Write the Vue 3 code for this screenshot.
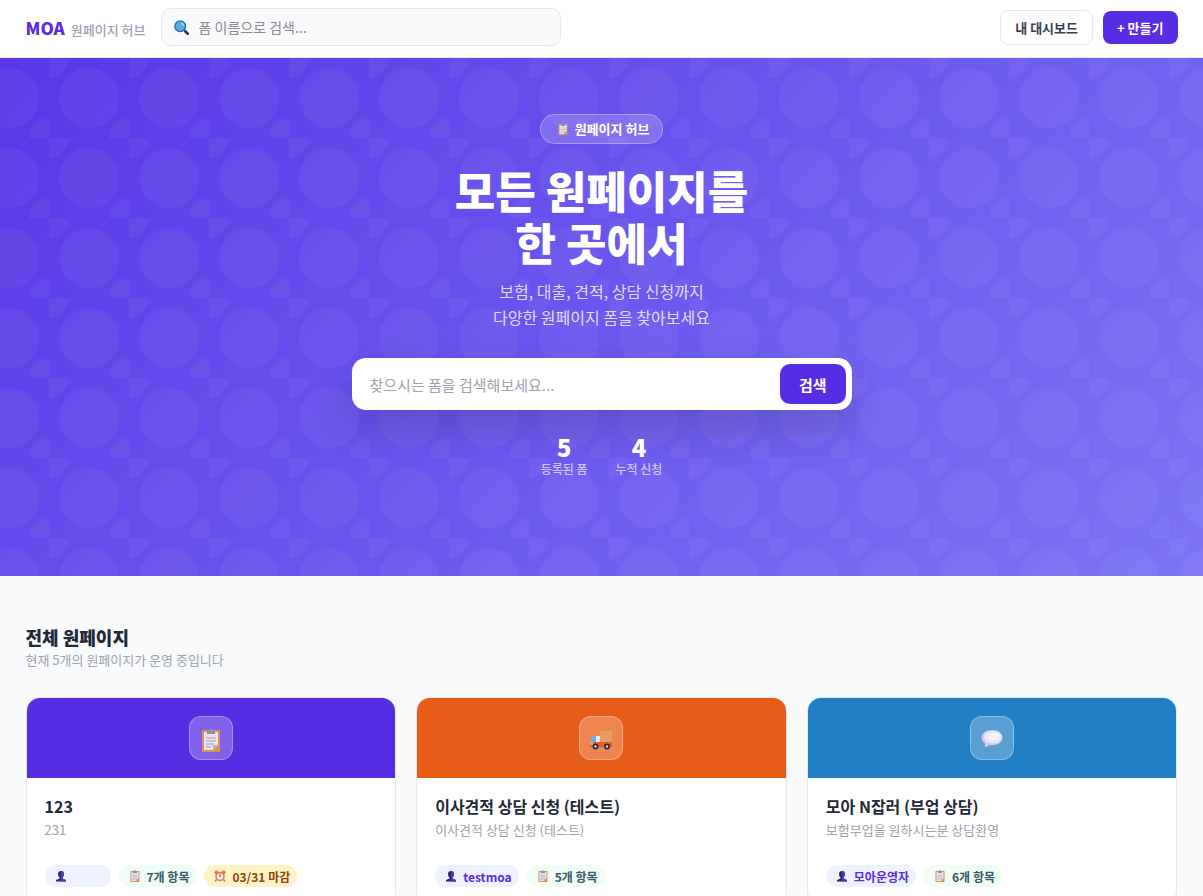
<template>
  <div class="page">
    <svg class="symbols" aria-hidden="true">
      <symbol id="icon-clipboard" viewBox="0 0 24 24">
        <rect x="3" y="2" width="18" height="22" rx="1" fill="#d9934e" />
        <path d="M5 4h14v13l-5 5H5z" fill="#e9e5f4" />
        <path d="M14 22v-5h5z" fill="#b9add2" />
        <path d="M7 10h10M7 13h10M7 16h8M7 19h5" stroke="#a39fb5" stroke-width="1" />
        <path d="M8 3h2c0-3.500 4-3.500 4 0h2v3H8z" fill="#898ba2" />
        <circle cx="12" cy="3" r="1" fill="#d9934e" />
      </symbol>
      <symbol id="icon-truck" viewBox="0 0 24 24">
        <rect x="11" y="3" width="12" height="12" fill="#e99c5c" />
        <path d="M4 8h6v6H1z" fill="#65b3ed" />
        <path d="M7 8h4v6H7z" fill="#e2e7f5" />
        <path d="M1 14h22v5H1z" fill="#e45e20" />
        <path d="M1 14h3v3H1z" fill="#f0a45c" />
        <circle cx="6.500" cy="18.500" r="3" fill="#262c42" />
        <circle cx="18" cy="18.500" r="3" fill="#262c42" />
        <circle cx="6.500" cy="18.500" r="1.200" fill="#d5d8f0" />
        <circle cx="18" cy="18.500" r="1.200" fill="#d5d8f0" />
      </symbol>
      <symbol id="icon-chat" viewBox="0 0 24 24">
        <path
          d="M12 2C6 2 1.500 5.500 1.500 9.500c0 2.500 1.500 4.300 3.500 5.500v4c1.500 0 3-1 4.500-2C17 18 22.500 14.500 22.500 9.500 22.500 5.500 18 2 12 2z"
          fill="#d6cbea"
        />
        <ellipse cx="13" cy="9" rx="9" ry="6.300" fill="#eae5f4" />
        <ellipse cx="14" cy="8.500" rx="6" ry="4" fill="#f4f1f9" />
      </symbol>
      <symbol id="icon-user" viewBox="0 0 24 24">
        <path d="M12 2c8 0 7 10 3 13v2l7 3v3H2v-3l7-3v-2C5 12 4 2 12 2z" fill="#27305d" />
        <path d="M12 2c8 0 7 10 3 13v2l7 3v3H12z" fill="#5631cc" />
      </symbol>
      <symbol id="icon-alarm" viewBox="0 0 24 24">
        <path d="M5 19l-3 4M19 19l3 4" stroke="#d9774c" stroke-width="3" />
        <circle cx="5" cy="5" r="4" fill="#e87545" />
        <circle cx="19" cy="5" r="4" fill="#e87545" />
        <circle cx="12" cy="13" r="9.500" fill="#e87545" />
        <circle cx="12" cy="13" r="6.500" fill="#f3edf5" />
        <path d="M12 8v6" stroke="#4c4a68" stroke-width="2" />
      </symbol>
      <symbol id="icon-search" viewBox="0 0 24 24">
        <path d="M16 16l3 3" stroke="#6b7a90" stroke-width="3" />
        <path d="M18 18l4 4" stroke="#352c58" stroke-width="4" stroke-linecap="round" />
        <circle cx="10" cy="10" r="8.500" fill="#5caae4" stroke="#1e6e9e" stroke-width="2" />
        <path d="M12 5q3 1 3 4" fill="none" stroke="#c8e6fa" stroke-width="2" />
      </symbol>
    </svg>

    <header class="topbar">
      <div class="container topbar-inner">
        <a href="#" class="logo">
          <span class="logo-name">MOA</span>
          <span class="logo-sub">원페이지 허브</span>
        </a>
        <label class="top-search">
          <svg class="search-icon" aria-hidden="true"><use href="#icon-search" /></svg>
          <input type="search" placeholder="폼 이름으로 검색..." aria-label="폼 이름으로 검색" />
        </label>
        <nav class="top-actions">
          <a href="#" class="btn btn-outline">내 대시보드</a>
          <a href="#" class="btn btn-primary">+ 만들기</a>
        </nav>
      </div>
    </header>

    <section class="hero">
      <svg class="hero-pattern" aria-hidden="true">
        <defs>
          <pattern id="dots" x="49" y="0" width="80" height="80" patternUnits="userSpaceOnUse">
            <circle cx="40" cy="40" r="30" />
            <circle cx="0" cy="0" r="20" />
            <circle cx="80" cy="80" r="20" />
          </pattern>
        </defs>
        <rect width="100%" height="100%" fill="url(#dots)" />
      </svg>
      <div class="hero-content">
        <div class="hero-badge">
          <svg class="badge-icon" aria-hidden="true"><use href="#icon-clipboard" /></svg>
          <span>원페이지 허브</span>
        </div>
        <h1>모든 원페이지를<br />한 곳에서</h1>
        <p class="hero-text">보험, 대출, 견적, 상담 신청까지<br />다양한 원페이지 폼을 찾아보세요</p>
        <form class="hero-search" @submit.prevent>
          <input type="text" placeholder="찾으시는 폼을 검색해보세요..." aria-label="폼 검색" />
          <button type="submit">검색</button>
        </form>
        <div class="stats">
          <div v-for="stat in stats" :key="stat.label" class="stat">
            <strong>{{ stat.value }}</strong>
            <span>{{ stat.label }}</span>
          </div>
        </div>
      </div>
    </section>

    <main class="container forms">
      <h2>전체 원페이지</h2>
      <p class="forms-count">현재 5개의 원페이지가 운영 중입니다</p>
      <div class="grid">
        <article v-for="form in forms" :key="form.title" class="card">
          <div class="card-cover" :class="form.theme">
            <div class="card-icon">
              <svg aria-hidden="true"><use :href="'#icon-' + form.icon" /></svg>
            </div>
          </div>
          <div class="card-body">
            <h3>{{ form.title }}</h3>
            <p>{{ form.desc }}</p>
            <div class="tags">
              <span class="tag tag-owner">
                <svg class="badge-icon" aria-hidden="true"><use href="#icon-user" /></svg>
                <span :class="{ 'no-owner': !form.owner }">{{ form.owner }}</span>
              </span>
              <span class="tag tag-fields">
                <svg class="badge-icon" aria-hidden="true"><use href="#icon-clipboard" /></svg>
                {{ form.fields }}개 항목
              </span>
              <span v-if="form.deadline" class="tag tag-deadline">
                <svg class="badge-icon" aria-hidden="true"><use href="#icon-alarm" /></svg>
                {{ form.deadline }} 마감
              </span>
            </div>
          </div>
        </article>
      </div>
    </main>
  </div>
</template>

<script setup>
const stats = [
  { value: 5, label: "등록된 폼" },
  { value: 4, label: "누적 신청" },
];

const forms = [
  {
    title: "123",
    desc: "231",
    icon: "clipboard",
    theme: "purple",
    owner: "",
    fields: 7,
    deadline: "03/31",
  },
  {
    title: "이사견적 상담 신청 (테스트)",
    desc: "이사견적 상담 신청 (테스트)",
    icon: "truck",
    theme: "orange",
    owner: "testmoa",
    fields: 5,
  },
  {
    title: "모아 N잡러 (부업 상담)",
    desc: "보험부업을 원하시는분 상담환영",
    icon: "chat",
    theme: "blue",
    owner: "모아운영자",
    fields: 6,
  },
];
</script>

<style>
body {
  background: #f9fafb;
}
</style>

<style scoped>
.page {
  font-family: "Noto Sans CJK KR", sans-serif;
  color: #1f2937;
}
.page * {
  box-sizing: border-box;
}
.symbols {
  display: none;
}
h1,
h2,
h3,
p {
  margin: 0;
}
a {
  text-decoration: none;
}
input,
button {
  font-family: inherit;
}
.container {
  max-width: 1200px;
  margin: 0 auto;
  padding: 0 24px;
}

.topbar {
  background: #fff;
  border-bottom: 1px solid #e5e7eb;
}
.topbar-inner {
  display: flex;
  align-items: center;
  gap: 16px;
  padding-top: 8px;
  padding-bottom: 11px;
}
.logo {
  display: flex;
  align-items: baseline;
  gap: 6px;
  white-space: nowrap;
}
.logo-name {
  font-size: 17px;
  font-weight: 900;
  color: #562de2;
}
.logo-sub {
  font-size: 13px;
  font-weight: 500;
  color: #9ca3af;
}
.top-search {
  display: flex;
  align-items: center;
  gap: 9px;
  flex: 0 1 400px;
  height: 38px;
  padding: 0 12px;
  background: #f9fafb;
  border: 1px solid #e5e7eb;
  border-radius: 10px;
}
.search-icon {
  flex: none;
  width: 15px;
  height: 15px;
}
.top-search input {
  flex: 1;
  min-width: 0;
  padding: 0;
  border: 0;
  outline: 0;
  background: none;
  font-size: 14px;
}
.top-search input::placeholder {
  color: #8f8792;
}
.top-actions {
  display: flex;
  align-items: center;
  gap: 10px;
  margin-left: auto;
}
.btn {
  padding: 7px 14px;
  border-radius: 8px;
  font-size: 13px;
  line-height: 19px;
  font-weight: 700;
  white-space: nowrap;
}
.btn-outline {
  border: 1px solid #e5e7eb;
  color: #374151;
}
.btn-primary {
  background: #562de2;
  color: #fff;
}

.hero {
  position: relative;
  padding: 56px 24px 98px;
  background: linear-gradient(135deg, #5a36e6 0%, #6a57ef 50%, #7c75f4 100%);
  text-align: center;
}
.hero-pattern {
  position: absolute;
  inset: 0;
  width: 100%;
  height: 100%;
  fill: #fff;
  opacity: 0.04;
}
.hero-content {
  position: relative;
  display: flex;
  flex-direction: column;
  align-items: center;
}
.badge-icon {
  flex: none;
  width: 12px;
  height: 12px;
}
.hero-badge {
  display: flex;
  align-items: center;
  gap: 6px;
  height: 30px;
  padding: 0 13px 0 16px;
  border: 1px solid rgba(255, 255, 255, 0.3);
  border-radius: 15px;
  background: rgba(255, 255, 255, 0.18);
  color: #fff;
  font-size: 13px;
  line-height: 18px;
  font-weight: 700;
}
h1 {
  margin-top: 20px;
  color: #fff;
  font-size: 44px;
  line-height: 52px;
  font-weight: 900;
}
.hero-text {
  margin-top: 10px;
  color: rgba(255, 255, 255, 0.8);
  font-size: 16px;
  line-height: 26px;
}
.hero-search {
  display: flex;
  width: 100%;
  max-width: 500px;
  height: 52px;
  margin-top: 28px;
  padding: 6px;
  background: #fff;
  border-radius: 14px;
  box-shadow: 0 20px 40px rgba(0, 0, 0, 0.15);
}
.hero-search input {
  flex: 1;
  min-width: 0;
  padding: 0 12px;
  border: 0;
  outline: 0;
  background: none;
  font-size: 15px;
}
.hero-search input::placeholder {
  color: #9ca3af;
}
.hero-search button {
  padding: 0 19px;
  border: 0;
  border-radius: 10px;
  background: #562de2;
  color: #fff;
  font-size: 15px;
  font-weight: 700;
}
.stats {
  display: flex;
  gap: 28px;
  margin-top: 24px;
}
.stat {
  display: flex;
  flex-direction: column;
  color: #fff;
}
.stat strong {
  font-size: 24px;
  line-height: 26px;
  font-weight: 900;
}
.stat span {
  font-size: 12px;
  line-height: 18px;
  font-weight: 500;
  opacity: 0.65;
}

.forms {
  padding-top: 48px;
  padding-bottom: 48px;
}
h2 {
  font-size: 18px;
  line-height: 26px;
  font-weight: 900;
}
.forms-count {
  color: #9ca3af;
  font-size: 13px;
  line-height: 19px;
}
.grid {
  display: grid;
  grid-template-columns: repeat(3, 1fr);
  gap: 20px;
  margin-top: 28px;
}
.card {
  overflow: hidden;
  background: #fff;
  border: 1px solid #e5e7eb;
  border-radius: 14px;
}
.card-cover {
  display: flex;
  align-items: center;
  justify-content: center;
  height: 80px;
}
.purple {
  background: #562de2;
}
.orange {
  background: #e75d17;
}
.blue {
  background: #2180c5;
}
.card-icon {
  display: flex;
  align-items: center;
  justify-content: center;
  width: 44px;
  height: 44px;
  padding-top: 4px;
  border: 1px solid rgba(255, 255, 255, 0.3);
  border-radius: 12px;
  background: rgba(255, 255, 255, 0.25);
}
.card-icon svg {
  width: 24px;
  height: 24px;
}
.card-body {
  padding: 18px;
}
h3 {
  font-size: 16px;
  line-height: 20px;
  font-weight: 700;
}
.card-body p {
  margin-top: 4px;
  color: #9ca3af;
  font-size: 13px;
  line-height: 20px;
}
.tags {
  display: flex;
  flex-wrap: wrap;
  gap: 8px;
  margin-top: 25px;
}
.tag {
  display: flex;
  align-items: center;
  gap: 6px;
  height: 22px;
  padding: 0 7px 0 10px;
  border-radius: 11px;
  font-size: 12px;
  font-weight: 700;
}
.tag-owner {
  background: #eef2ff;
  color: #562de2;
}
.no-owner {
  width: 31px;
}
.tag-fields {
  background: #f0fdf4;
  color: #33596a;
}
.tag-deadline {
  background: #fef3c7;
  color: #92400e;
}
</style>
